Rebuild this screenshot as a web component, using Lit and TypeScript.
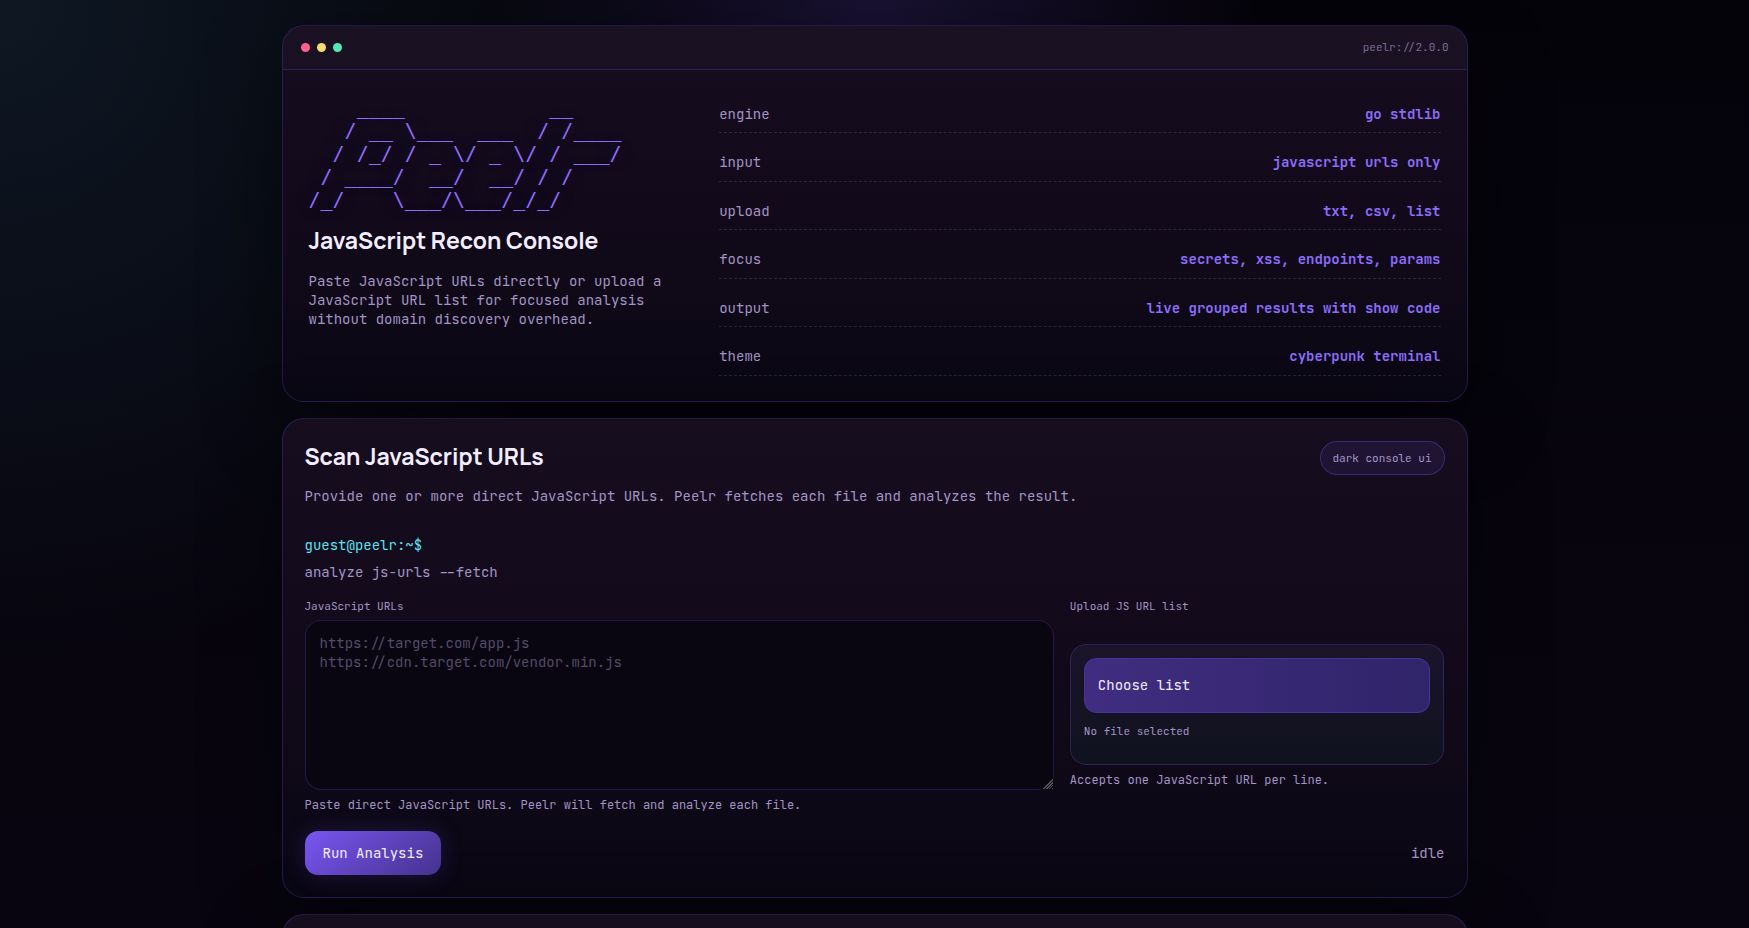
import { LitElement, html, css } from "lit";
import { customElement, state } from "lit/decorators.js";

const BANNER = [
  "    ____            __",
  "   / __ \\___  ___  / /____",
  "  / /_/ / _ \\/ _ \\/ / ___/",
  " / ____/  __/  __/ / /",
  "/_/    \\___/\\___/_/_/",
].join("\n");

const FACTS: [string, string][] = [
  ["engine", "go stdlib"],
  ["input", "javascript urls only"],
  ["upload", "txt, csv, list"],
  ["focus", "secrets, xss, endpoints, params"],
  ["output", "live grouped results with show code"],
  ["theme", "cyberpunk terminal"],
];

@customElement("app-root")
export class AppRoot extends LitElement {
  @state() private fileName = "No file selected";
  @state() private status = "idle";

  static styles = css`
    :host {
      --mono: "JetBrains Mono", "DejaVu Sans Mono", monospace;
      --display: Manrope, Inter, sans-serif;
      --text: #f3eeff;
      --muted: #a394c4;
      --accent: #8b6dfa;
      --line: rgba(124, 92, 255, 0.22);
      display: block;
      height: 100vh;
      overflow-y: auto;
      scrollbar-width: none;
      color: var(--text);
      font: 14px/19px var(--mono);
      background:
        radial-gradient(circle at top left, rgba(92, 205, 255, 0.1), transparent 34%),
        radial-gradient(circle at top, rgba(124, 92, 255, 0.17), transparent 30%),
        linear-gradient(180deg, #05030a, #080510);
    }
    * {
      box-sizing: border-box;
    }
    h1,
    h2,
    p,
    pre,
    dl,
    dd {
      margin: 0;
    }
    .shell {
      width: calc(100% - 32px);
      max-width: 1186px;
      margin: 0 auto;
      padding: 25px 0;
      display: grid;
      gap: 16px;
    }
    .card {
      border: 1px solid var(--line);
      border-radius: 22px;
      background: linear-gradient(180deg, #160d1f, #120a1a 50%, #0a0714);
      box-shadow: 0 24px 80px rgba(0, 0, 0, 0.45);
      overflow: hidden;
    }
    .bar {
      display: flex;
      justify-content: space-between;
      align-items: center;
      height: 44px;
      padding: 0 18px;
      border-bottom: 1px solid var(--line);
      background: rgba(255, 255, 255, 0.02);
    }
    .dots {
      display: flex;
      gap: 7px;
    }
    .dot {
      width: 9px;
      height: 9px;
      border-radius: 50%;
    }
    .red {
      background: #ff5f8d;
    }
    .yellow {
      background: #f3dc70;
    }
    .green {
      background: #56e8b4;
    }
    .version {
      color: #7a6c95;
      font-size: 11px;
    }
    .hero {
      display: grid;
      grid-template-columns: 8fr 15fr;
      gap: 26px;
      padding: 26px 26px 25px;
    }
    .banner {
      margin-bottom: 14px;
      color: var(--accent);
      font: 20px/23px "DejaVu Sans Mono", monospace;
      text-shadow: 0 0 24px rgba(124, 92, 255, 0.25);
    }
    h1,
    h2 {
      font: 700 23px/30px var(--display);
    }
    .intro {
      display: flex;
      flex-direction: column;
      gap: 17px;
    }
    .muted {
      color: var(--muted);
    }
    .facts {
      display: flex;
      flex-direction: column;
      justify-content: space-between;
      min-height: 280px;
    }
    .fact {
      display: flex;
      justify-content: space-between;
      align-items: center;
      height: 37px;
      border-bottom: 1px dashed rgba(85, 225, 240, 0.16);
    }
    .fact dt {
      color: var(--muted);
    }
    .fact dd {
      color: var(--accent);
      font-weight: 700;
    }
    .scan {
      padding: 22px;
    }
    .head {
      display: flex;
      justify-content: space-between;
      align-items: flex-start;
    }
    .titles {
      display: grid;
      gap: 16px;
    }
    .pill {
      padding: 7px 12px;
      border: 1px solid rgba(124, 92, 255, 0.3);
      border-radius: 17px;
      background: rgba(124, 92, 255, 0.1);
      color: var(--muted);
      font-size: 11px;
      line-height: 18px;
    }
    .prompt {
      display: grid;
      gap: 8px;
      margin: 30px 0 15px;
      color: var(--muted);
    }
    .user {
      color: #5ce1f2;
    }
    .fields {
      display: grid;
      grid-template-columns: 2fr 1fr;
      gap: 16px;
    }
    .field {
      display: flex;
      flex-direction: column;
    }
    .label {
      margin-bottom: 4px;
      color: var(--muted);
      font-size: 11px;
    }
    textarea {
      display: block;
      width: 100%;
      height: 170px;
      padding: 13px 14px;
      border: 1px solid var(--line);
      border-radius: 16px;
      outline: none;
      resize: vertical;
      background: #090612;
      color: var(--text);
      font: 14px/19px var(--mono);
    }
    textarea::placeholder {
      color: #544b66;
    }
    textarea::-webkit-resizer {
      background:
        linear-gradient(135deg, #090612 62%, transparent 62%),
        repeating-linear-gradient(135deg, #57545c 0 1px, #090612 1px 2px);
    }
    .help {
      margin-top: 6px;
      color: var(--muted);
      font-size: 12px;
    }
    .drop {
      margin-top: 24px;
      height: 121px;
      padding: 13px;
      border: 1px solid var(--line);
      border-radius: 16px;
      background: linear-gradient(180deg, #1b142b, #10121e);
    }
    .choose {
      display: flex;
      align-items: center;
      height: 55px;
      padding: 0 13px;
      border: 1px solid #46339a;
      border-radius: 12px;
      background: linear-gradient(90deg, #402d80, #30246a);
      cursor: pointer;
    }
    .file {
      width: 1px;
      height: 1px;
      position: absolute;
      opacity: 0;
    }
    .name {
      margin-top: 9px;
      color: var(--muted);
      font-size: 11px;
    }
    .actions {
      display: flex;
      justify-content: space-between;
      align-items: center;
      margin-top: 16px;
      color: var(--muted);
    }
    .run {
      height: 44px;
      padding: 0 18px;
      border: 0;
      border-radius: 13px;
      background: linear-gradient(135deg, #7856f0, #473391);
      box-shadow: 0 0 24px rgba(124, 92, 255, 0.18);
      color: var(--text);
      font: 14px/19px var(--mono);
      cursor: pointer;
    }
    .results {
      min-height: 160px;
    }
  `;

  private pick(e: Event) {
    const files = (e.target as HTMLInputElement).files;
    this.fileName = files && files.length ? files[0].name : "No file selected";
  }

  render() {
    return html`
      <main class="shell">
        <header class="card">
          <div class="bar">
            <div class="dots">
              <span class="dot red"></span>
              <span class="dot yellow"></span>
              <span class="dot green"></span>
            </div>
            <span class="version">peelr://2.0.0</span>
          </div>
          <div class="hero">
            <div class="intro">
              <div>
                <pre class="banner">${BANNER}</pre>
                <h1>JavaScript Recon Console</h1>
              </div>
              <p class="muted">
                Paste JavaScript URLs directly or upload a JavaScript URL list for focused analysis
                without domain discovery overhead.
              </p>
            </div>
            <dl class="facts">
              ${FACTS.map(([k, v]) => html`<div class="fact"><dt>${k}</dt><dd>${v}</dd></div>`)}
            </dl>
          </div>
        </header>

        <section class="card scan">
          <div class="head">
            <div class="titles">
              <h2>Scan JavaScript URLs</h2>
              <p class="muted">
                Provide one or more direct JavaScript URLs. Peelr fetches each file and analyzes the
                result.
              </p>
            </div>
            <span class="pill">dark console ui</span>
          </div>
          <div class="prompt">
            <span class="user">guest@peelr:~$</span>
            <span>analyze js-urls --fetch</span>
          </div>
          <div class="fields">
            <div class="field">
              <label class="label" for="urls">JavaScript URLs</label>
              <textarea
                id="urls"
                placeholder="https://target.com/app.js&#10;https://cdn.target.com/vendor.min.js"
              ></textarea>
              <p class="help">
                Paste direct JavaScript URLs. Peelr will fetch and analyze each file.
              </p>
            </div>
            <div class="field">
              <label class="label" for="list">Upload JS URL list</label>
              <div class="drop">
                <input class="file" id="list" type="file" accept=".txt,.csv,.list" @change=${this.pick} />
                <label class="choose" for="list">Choose list</label>
                <p class="name">${this.fileName}</p>
              </div>
              <p class="help">Accepts one JavaScript URL per line.</p>
            </div>
          </div>
          <div class="actions">
            <button class="run" type="button" @click=${() => (this.status = "running")}>
              Run Analysis
            </button>
            <span>${this.status}</span>
          </div>
        </section>

        <section class="card results"></section>
      </main>
    `;
  }
}
